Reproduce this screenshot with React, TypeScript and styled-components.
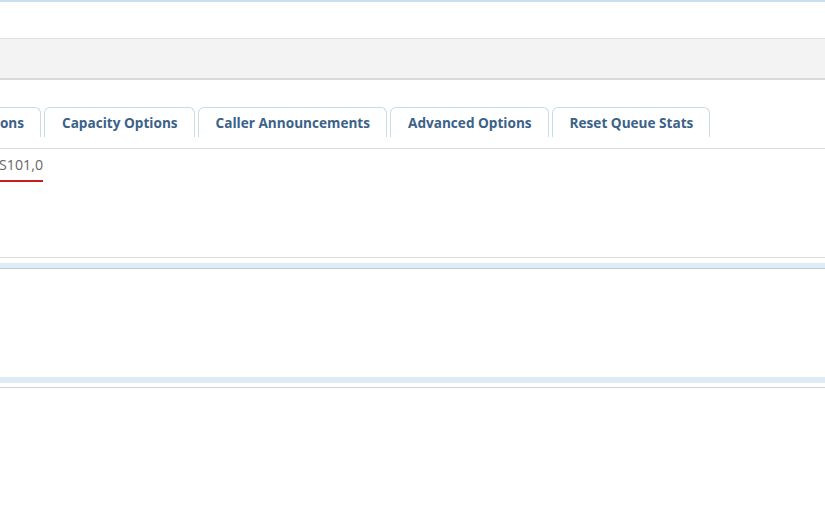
import styled, { createGlobalStyle } from "styled-components";

const GlobalStyle = createGlobalStyle`
  html, body {
    margin: 0;
    padding: 0;
    background: #ffffff;
    font-family: "Open Sans", "Liberation Sans", sans-serif;
    overflow: hidden;
  }
`;

const tabs = [
  "Queue Options",
  "Capacity Options",
  "Caller Announcements",
  "Advanced Options",
  "Reset Queue Stats",
];

export default function App() {
  return (
    <>
      <GlobalStyle />
      <Page>
        <TopRule />
        <Toolbar />
        <TabList>
          {tabs.map((label, i) => (
            <Tab key={label} $first={i === 0}>
              {label}
            </Tab>
          ))}
        </TabList>
        <Panel>
          <FieldValue>SIP/S101,0</FieldValue>
        </Panel>
        <Section>
          <SectionBody />
        </Section>
      </Page>
    </>
  );
}

const Page = styled.div`
  width: 825px;
  height: 510px;
  display: flex;
  flex-direction: column;
  overflow: hidden;
`;

const TopRule = styled.div`
  flex: none;
  height: 2px;
  background: #c9dfef;
`;

const Toolbar = styled.div`
  flex: none;
  margin-top: 36px;
  height: 39px;
  background: #f3f3f3;
  border-top: 1px solid #e1e1e1;
  border-bottom: 2px solid #d9d9d9;
`;

const TabList = styled.div`
  flex: none;
  margin-top: 27px;
  margin-left: -100px;
  display: flex;
  gap: 3px;
  height: 30px;
`;

const Tab = styled.div<{ $first?: boolean }>`
  box-sizing: border-box;
  height: 30px;
  padding: 0 16px 0 17px;
  border: 1px solid #cadbe5;
  border-bottom: none;
  border-radius: 6px 6px 0 0;
  background: #ffffff;
  color: #3a6289;
  font-size: 13.6px;
  font-weight: 700;
  line-height: 29px;
  white-space: nowrap;
  display: flex;
  justify-content: flex-end;
  width: ${(p) => (p.$first ? "141px" : "auto")};
  overflow: hidden;
`;

const Panel = styled.div`
  flex: none;
  margin-top: 11px;
  height: 110px;
  border-top: 1px solid #dcdcdc;
  border-bottom: 1px solid #dddddd;
  padding-top: 6px;
  box-sizing: border-box;
`;

const FieldValue = styled.div`
  box-sizing: border-box;
  margin-left: -87px;
  width: 130px;
  text-align: right;
  font-size: 14.2px;
  line-height: 20px;
  white-space: nowrap;
  color: #666666;
  padding-bottom: 5px;
  border-bottom: 2px solid #c81e1e;
`;

const Section = styled.div`
  flex: none;
  margin-top: 5px;
  border-top: 5px solid #ddecf6;
  border-bottom: 1px solid #ccd5db;
`;

const SectionBody = styled.div`
  height: 108px;
  border-top: 1px solid #bccbd6;
  border-bottom: 6px solid #ddecf6;
  margin-bottom: 4px;
`;
